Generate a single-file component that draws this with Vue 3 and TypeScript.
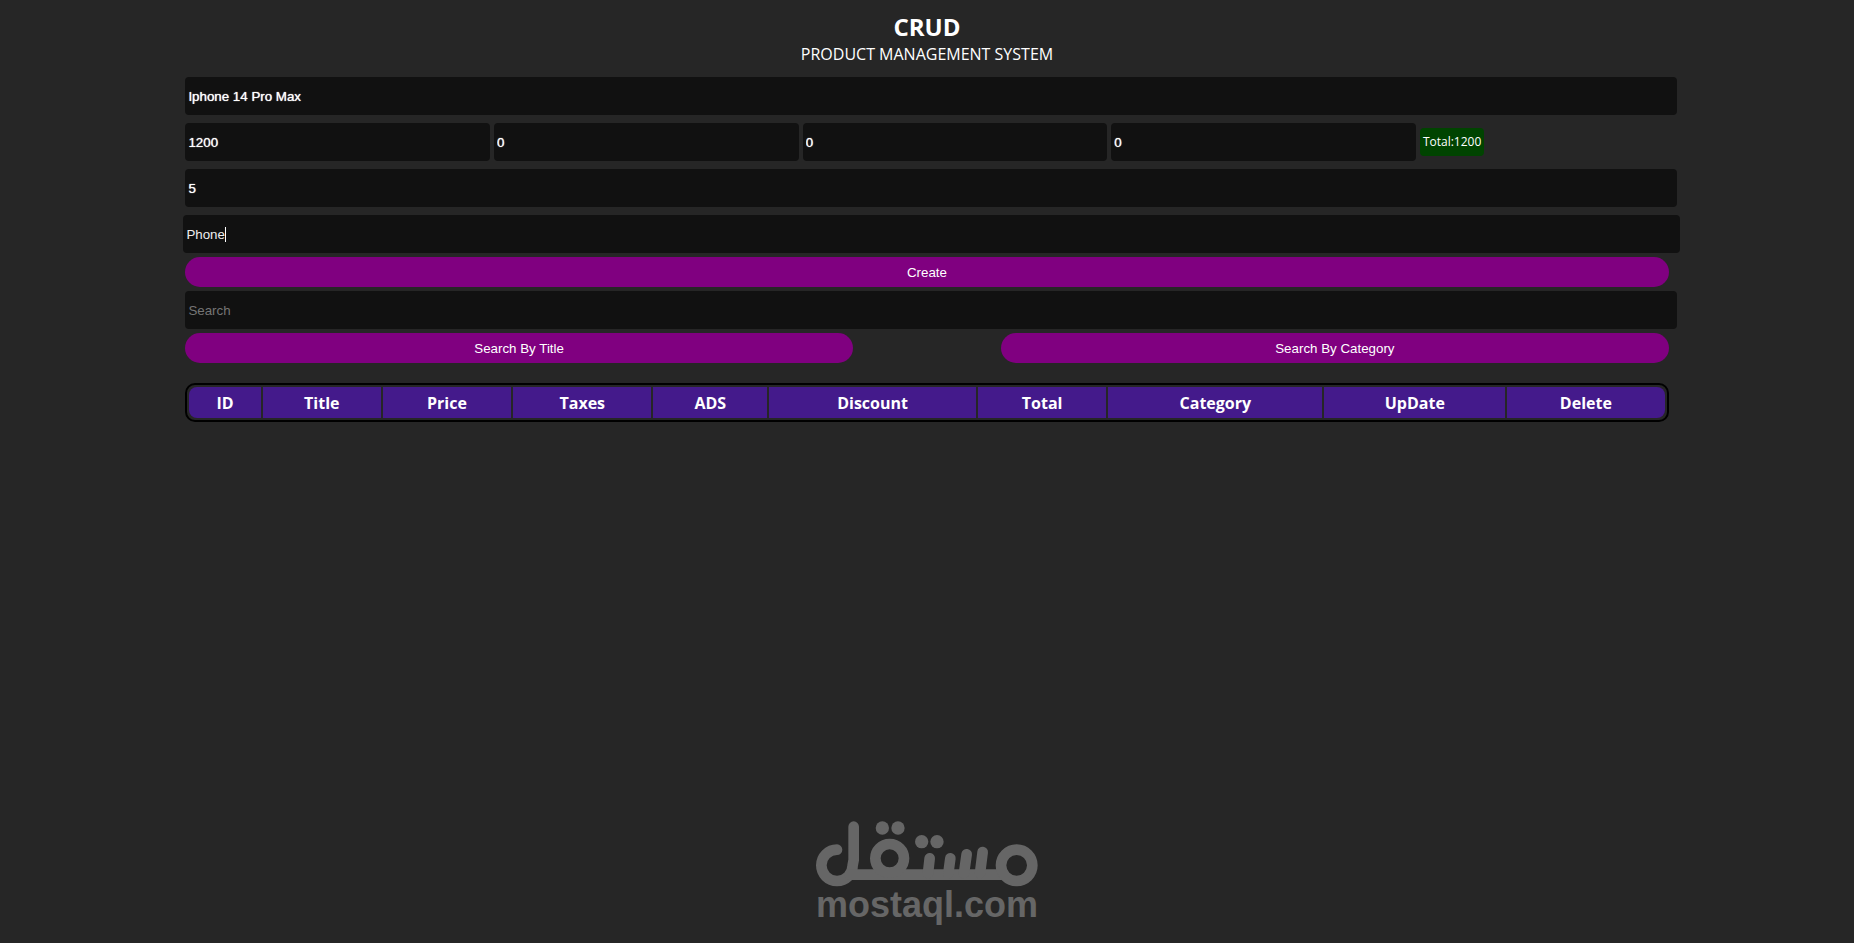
<script setup lang="ts">
import { computed, onMounted, ref } from 'vue'

interface Column {
  label: string
  share: number
}

const title = ref('Iphone 14 Pro Max')
const price = ref('1200')
const taxes = ref('0')
const ads = ref('0')
const discount = ref('0')
const count = ref('5')
const category = ref('Phone')
const search = ref('')
const categoryField = ref<HTMLInputElement | null>(null)

const total = computed(() => Number(price.value) + Number(taxes.value) + Number(ads.value) - Number(discount.value))

const columns: Column[] = [
  { label: 'ID', share: 4.9 },
  { label: 'Title', share: 8.1 },
  { label: 'Price', share: 8.8 },
  { label: 'Taxes', share: 9.5 },
  { label: 'ADS', share: 7.8 },
  { label: 'Discount', share: 14.2 },
  { label: 'Total', share: 8.8 },
  { label: 'Category', share: 14.7 },
  { label: 'UpDate', share: 12.4 },
  { label: 'Delete', share: 10.8 },
]

onMounted(() => categoryField.value?.focus())
</script>

<template>
  <main class="crud">
    <header class="head">
      <h1>CRUD</h1>
      <p>PRODUCT MANAGEMENT SYSTEM</p>
    </header>

    <form class="inputs" @submit.prevent>
      <input v-model="title" class="field" type="text" aria-label="Title" placeholder="Title" />
      <div class="prices">
        <input v-model="price" class="field" type="text" aria-label="Price" placeholder="Price" />
        <input v-model="taxes" class="field" type="text" aria-label="Taxes" placeholder="Taxes" />
        <input v-model="ads" class="field" type="text" aria-label="Ads" placeholder="Ads" />
        <input v-model="discount" class="field" type="text" aria-label="Discount" placeholder="Discount" />
        <output class="total">Total:{{ total }}</output>
      </div>
      <input v-model="count" class="field" type="text" aria-label="Count" placeholder="Count" />
      <div class="editing">
        <input ref="categoryField" v-model="category" class="field" type="text" aria-label="Category" placeholder="Category" />
        <span class="caret" aria-hidden="true"></span>
      </div>
    </form>

    <div class="actions">
      <button type="button">Create</button>
      <input v-model="search" class="field" type="text" aria-label="Search" placeholder="Search" />
      <div class="search-buttons">
        <button type="button">Search By Title</button>
        <button type="button">Search By Category</button>
      </div>
    </div>

    <table class="products">
      <colgroup>
        <col v-for="c in columns" :key="c.label" :style="{ width: c.share + '%' }" />
      </colgroup>
      <thead>
        <tr>
          <th v-for="c in columns" :key="c.label" scope="col">{{ c.label }}</th>
        </tr>
      </thead>
    </table>

    <svg class="mark" viewBox="45 30 672 315" role="img" aria-label="mostaql.com">
      <g fill="none" stroke="#666" stroke-width="32" stroke-linecap="round">
        <path d="M111 119A47 47 0 1 0 158 166L161 150V50" />
        <path d="M150 194H606" />
        <circle cx="269" cy="145" r="43" />
        <circle cx="650" cy="166" r="47" />
        <path d="M389 145L384 190M451 145L445 190M500 133L492 190M548 126L540 190" />
      </g>
      <g fill="#666">
        <circle cx="247" cy="54" r="20" />
        <circle cx="294" cy="54" r="20" />
        <circle cx="365" cy="95" r="20" />
        <circle cx="411" cy="95" r="20" />
        <text x="381" y="320" text-anchor="middle">mostaql.com</text>
      </g>
    </svg>
  </main>
</template>

<style>
body {
  margin: 0;
  background: #262626;
}
</style>

<style scoped>
.crud {
  box-sizing: border-box;
  width: 80%;
  min-height: 100vh;
  margin: 0 auto;
  color: #fff;
  font-family: "Segoe UI", "Open Sans", "Noto Sans", sans-serif;
}

.head {
  padding: 11px 0 12px;
  text-align: center;
}

h1 {
  margin: 0;
  font-size: 24px;
  line-height: 32px;
}

p {
  margin: 0;
  font-size: 16px;
  line-height: 22px;
}

.inputs {
  display: grid;
  gap: 8px;
}

.field {
  display: block;
  box-sizing: border-box;
  width: calc(100% + 8px);
  height: 38px;
  padding: 4px 3px;
  border: 0;
  border-radius: 4px;
  outline: 0;
  background: #111;
  color: #fff;
  font-family: Arial, "Liberation Sans", sans-serif;
}

.inputs .field {
  text-shadow: 0 0 1px #fff;
}

.editing {
  position: relative;
  margin: 0 -11px 0 -2px;
}

.editing .field {
  width: 100%;
  color: #eee;
  text-shadow: none;
  caret-color: transparent;
}

.caret {
  position: absolute;
  top: 12px;
  left: 42px;
  width: 1px;
  height: 15px;
  background: #fff;
}

.field::placeholder {
  color: #757575;
}

.prices {
  display: flex;
  align-items: center;
  gap: 4px;
}

.prices .field {
  width: calc(20% + 8px);
}

.total {
  padding: 4px 3px;
  border-radius: 4px;
  background: #040;
  font-size: 12px;
  line-height: 20px;
}

.actions {
  display: grid;
  gap: 4px;
  margin-top: 4px;
}

button {
  height: 30px;
  padding: 0;
  border: 0;
  border-radius: 15px;
  background: #800080;
  color: #fff;
  font-family: Arial, "Liberation Sans", sans-serif;
  cursor: pointer;
}

.search-buttons {
  display: flex;
  justify-content: space-between;
}

.search-buttons button {
  width: 45%;
}

.products {
  width: 100%;
  margin-top: 20px;
  table-layout: fixed;
  border: 2px solid #000;
  border-radius: 10px;
  border-spacing: 2px;
}

th {
  height: 31px;
  padding: 0;
  background: #441a8b;
  font-size: 16px;
  line-height: 22px;
}

th:first-child {
  border-radius: 8px 0 0 8px;
}

th:last-child {
  border-radius: 0 8px 8px 0;
}

.mark {
  position: absolute;
  bottom: 18px;
  left: 50%;
  width: 224px;
  transform: translateX(-50%);
}

.mark text {
  font: bold 108px Arial, "Liberation Sans", sans-serif;
}
</style>
